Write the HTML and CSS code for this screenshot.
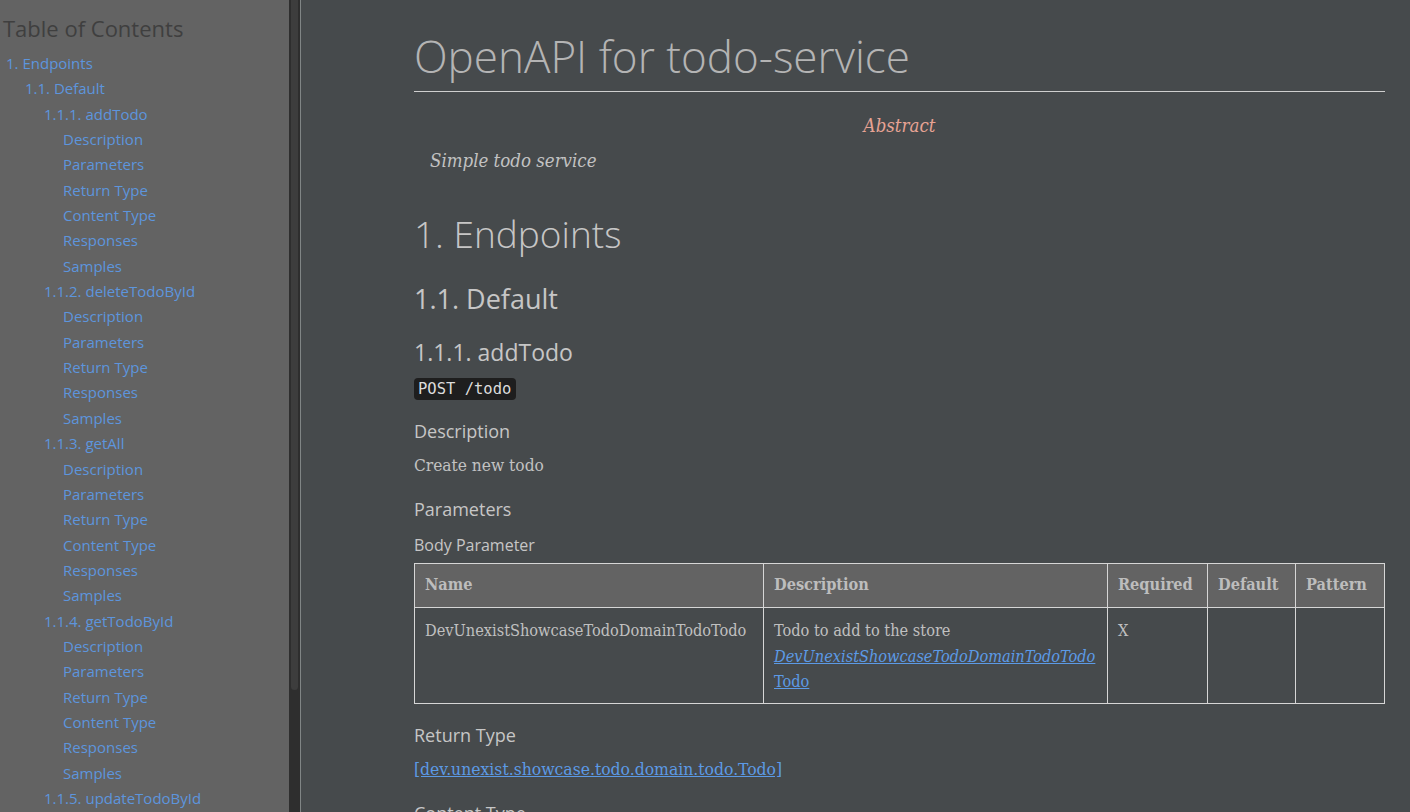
FILE: index.html
```html
<!DOCTYPE html>
<html lang="en">
<head>
<meta charset="utf-8">
<title>OpenAPI for todo-service</title>
<link rel="stylesheet" href="styles.css">
</head>
<body>
<div class="page">
  <aside class="toc">
    <div class="toc-title">Table of Contents</div>
    <ul class="lvl lvl1">
      <li><a href="#endpoints">1. Endpoints</a>
        <ul class="lvl">
          <li><a href="#default">1.1. Default</a>
            <ul class="lvl">
              <li><a href="#addTodo">1.1.1. addTodo</a>
                <ul class="lvl">
                  <li><a href="#">Description</a></li>
                  <li><a href="#">Parameters</a></li>
                  <li><a href="#">Return Type</a></li>
                  <li><a href="#">Content Type</a></li>
                  <li><a href="#">Responses</a></li>
                  <li><a href="#">Samples</a></li>
                </ul>
              </li>
              <li><a href="#">1.1.2. deleteTodoById</a>
                <ul class="lvl">
                  <li><a href="#">Description</a></li>
                  <li><a href="#">Parameters</a></li>
                  <li><a href="#">Return Type</a></li>
                  <li><a href="#">Responses</a></li>
                  <li><a href="#">Samples</a></li>
                </ul>
              </li>
              <li><a href="#">1.1.3. getAll</a>
                <ul class="lvl">
                  <li><a href="#">Description</a></li>
                  <li><a href="#">Parameters</a></li>
                  <li><a href="#">Return Type</a></li>
                  <li><a href="#">Content Type</a></li>
                  <li><a href="#">Responses</a></li>
                  <li><a href="#">Samples</a></li>
                </ul>
              </li>
              <li><a href="#">1.1.4. getTodoById</a>
                <ul class="lvl">
                  <li><a href="#">Description</a></li>
                  <li><a href="#">Parameters</a></li>
                  <li><a href="#">Return Type</a></li>
                  <li><a href="#">Content Type</a></li>
                  <li><a href="#">Responses</a></li>
                  <li><a href="#">Samples</a></li>
                </ul>
              </li>
              <li><a href="#">1.1.5. updateTodoById</a>
                <ul class="lvl">
                  <li><a href="#">Description</a></li>
                  <li><a href="#">Parameters</a></li>
                  <li><a href="#">Return Type</a></li>
                  <li><a href="#">Responses</a></li>
                  <li><a href="#">Samples</a></li>
                </ul>
              </li>
            </ul>
          </li>
        </ul>
      </li>
    </ul>
  </aside>
  <div class="scrollbar" aria-hidden="true"><div class="thumb"></div></div>
  <main class="content">
    <h1 class="doc-title">OpenAPI for todo-service</h1>
    <div class="abstract">
      <div class="abstract-title">Abstract</div>
      <p class="abstract-text">Simple todo service</p>
    </div>
    <h2 class="h2" id="endpoints">1. Endpoints</h2>
    <h3 class="h3" id="default">1.1. Default</h3>
    <h4 class="h4" id="addTodo">1.1.1. addTodo</h4>
    <p class="route"><code class="code">POST /todo</code></p>
    <h5 class="h5">Description</h5>
    <p class="para">Create new todo</p>
    <h5 class="h5">Parameters</h5>
    <h6 class="h6">Body Parameter</h6>
    <table class="params">
      <colgroup>
        <col class="c-name"><col class="c-desc"><col class="c-req"><col class="c-def"><col class="c-pat">
      </colgroup>
      <thead>
        <tr><th>Name</th><th>Description</th><th>Required</th><th>Default</th><th>Pattern</th></tr>
      </thead>
      <tbody>
        <tr>
          <td>DevUnexistShowcaseTodoDomainTodoTodo</td>
          <td>Todo to add to the store <a class="link" href="#"><em class="nobreak">DevUnexistShowcaseTodoDomainTodoTodo</em><wbr>Todo</a></td>
          <td>X</td>
          <td></td>
          <td></td>
        </tr>
      </tbody>
    </table>
    <h5 class="h5">Return Type</h5>
    <p class="para"><a class="link link-type" href="#">[dev.unexist.showcase.todo.domain.todo.Todo]</a></p>
    <h5 class="h5">Content Type</h5>
    <ul class="plain">
      <li>application/json</li>
    </ul>
  </main>
</div>
</body>
</html>
```

FILE: styles.css
```css
html, body {
  margin: 0;
  padding: 0;
  height: 100%;
  overflow: hidden;
}

body {
  background: #464a4c;
  color: #c2c2c2;
  font-family: "DejaVu Serif Condensed", "DejaVu Serif", serif;
}

.page {
  display: flex;
  height: 812px;
}

/* ---------- TOC ---------- */
.toc {
  flex: 0 0 289px;
  width: 289px;
  height: 812px;
  overflow: hidden;
  background: #636363;
  font-family: "Open Sans", sans-serif;
}

.toc-title {
  font-size: 22px;
  line-height: 28px;
  color: #3f3f3f;
  font-weight: 400;
  padding: 14px 0 0 3px;
}

.lvl {
  list-style: none;
  margin: 0;
  padding: 0 0 0 19px;
}
.lvl1 {
  padding-left: 6px;
  margin-top: 11px;
}

.lvl li {
  font-size: 15px;
  line-height: 20.34px;
  margin-top: 5px;
}

.toc a {
  color: #5d95dd;
  text-decoration: none;
}

/* ---------- scrollbar of the TOC ---------- */
.scrollbar {
  flex: 0 0 12px;
  width: 12px;
  height: 812px;
  background: #2e2e2e;
  border-right: 1px solid #808585;
  padding: 0 2px;
  box-sizing: border-box;
}
.thumb {
  height: 690px;
  background: #3d3d3d;
  border-radius: 0 0 4px 4px;
}

/* ---------- CONTENT ---------- */
.content {
  flex: 1 1 auto;
  min-width: 0;
  height: 812px;
  overflow: hidden;
  padding: 0 25px 0 113px;
}

.doc-title,
.h2, .h3, .h4, .h5, .h6 {
  font-family: "Open Sans", sans-serif;
  font-weight: 400;
  margin: 0;
  color: #c6c6c6;
}

.doc-title {
  font-size: 44px;
  line-height: 53px;
  margin-top: 30px;
  padding-bottom: 8px;
  border-bottom: 1px solid #cfcfcf;
  color: #b4b4b4;
  font-weight: 300;
}

.abstract {
  margin-top: 21px;
}
.abstract-title {
  text-align: center;
  font-style: italic;
  font-size: 18.5px;
  line-height: 26px;
  color: #e7a394;
}
.abstract-text {
  margin: 9px 0 0;
  padding-left: 16px;
  font-style: italic;
  font-size: 18.5px;
  line-height: 26px;
  color: #c2c2c2;
}

.h2 {
  font-size: 37px;
  line-height: 44px;
  margin-top: 38px;
  font-weight: 300;
}
.h3 {
  font-size: 27px;
  line-height: 34px;
  margin-top: 26px;
}
.h4 {
  font-size: 23px;
  line-height: 30px;
  margin-top: 21px;
}
.h5 {
  font-size: 18px;
  line-height: 24px;
  margin-top: 19px;
}
.h6 {
  font-size: 16px;
  line-height: 22px;
  margin-top: 13px;
}

.route {
  margin: 11px 0 0;
  line-height: 22px;
  height: 22px;
}
.code {
  display: inline-block;
  font-family: "DejaVu Sans Mono", monospace;
  font-size: 15.5px;
  line-height: 22px;
  padding: 0 5px 0 4px;
  background: #1e1e1e;
  color: #dcdcdc;
  border-radius: 4px;
  vertical-align: top;
}

.para {
  margin: 9px 0 0;
  font-size: 17.2px;
  line-height: 26px;
  color: #c2c2c2;
}

.link {
  color: #5c9ae6;
  text-decoration: underline;
}
.link-type {
  font-size: 17.4px;
}
.nobreak {
  white-space: nowrap;
}

/* ---------- TABLE ---------- */
.params {
  margin-top: 7px;
  width: 970px;
  table-layout: fixed;
  border-collapse: collapse;
  font-size: 16.2px;
}
.c-name { width: 349px; }
.c-desc { width: 344px; }
.c-req { width: 100px; }
.c-def { width: 88px; }
.c-pat { width: 89px; }

.params th,
.params td {
  border: 1px solid #d6d6d6;
  text-align: left;
  vertical-align: top;
  padding: 10px 10px 8px;
  line-height: 25.5px;
  color: #c0c0c0;
}
.params th {
  background: #636363;
  font-weight: 700;
  padding: 9px 10px 11px;
  line-height: 23px;
  color: #bdbdbd;
}

.plain {
  margin: 8px 0 0;
  padding-left: 20px;
  font-size: 17px;
  line-height: 26px;
}
```
